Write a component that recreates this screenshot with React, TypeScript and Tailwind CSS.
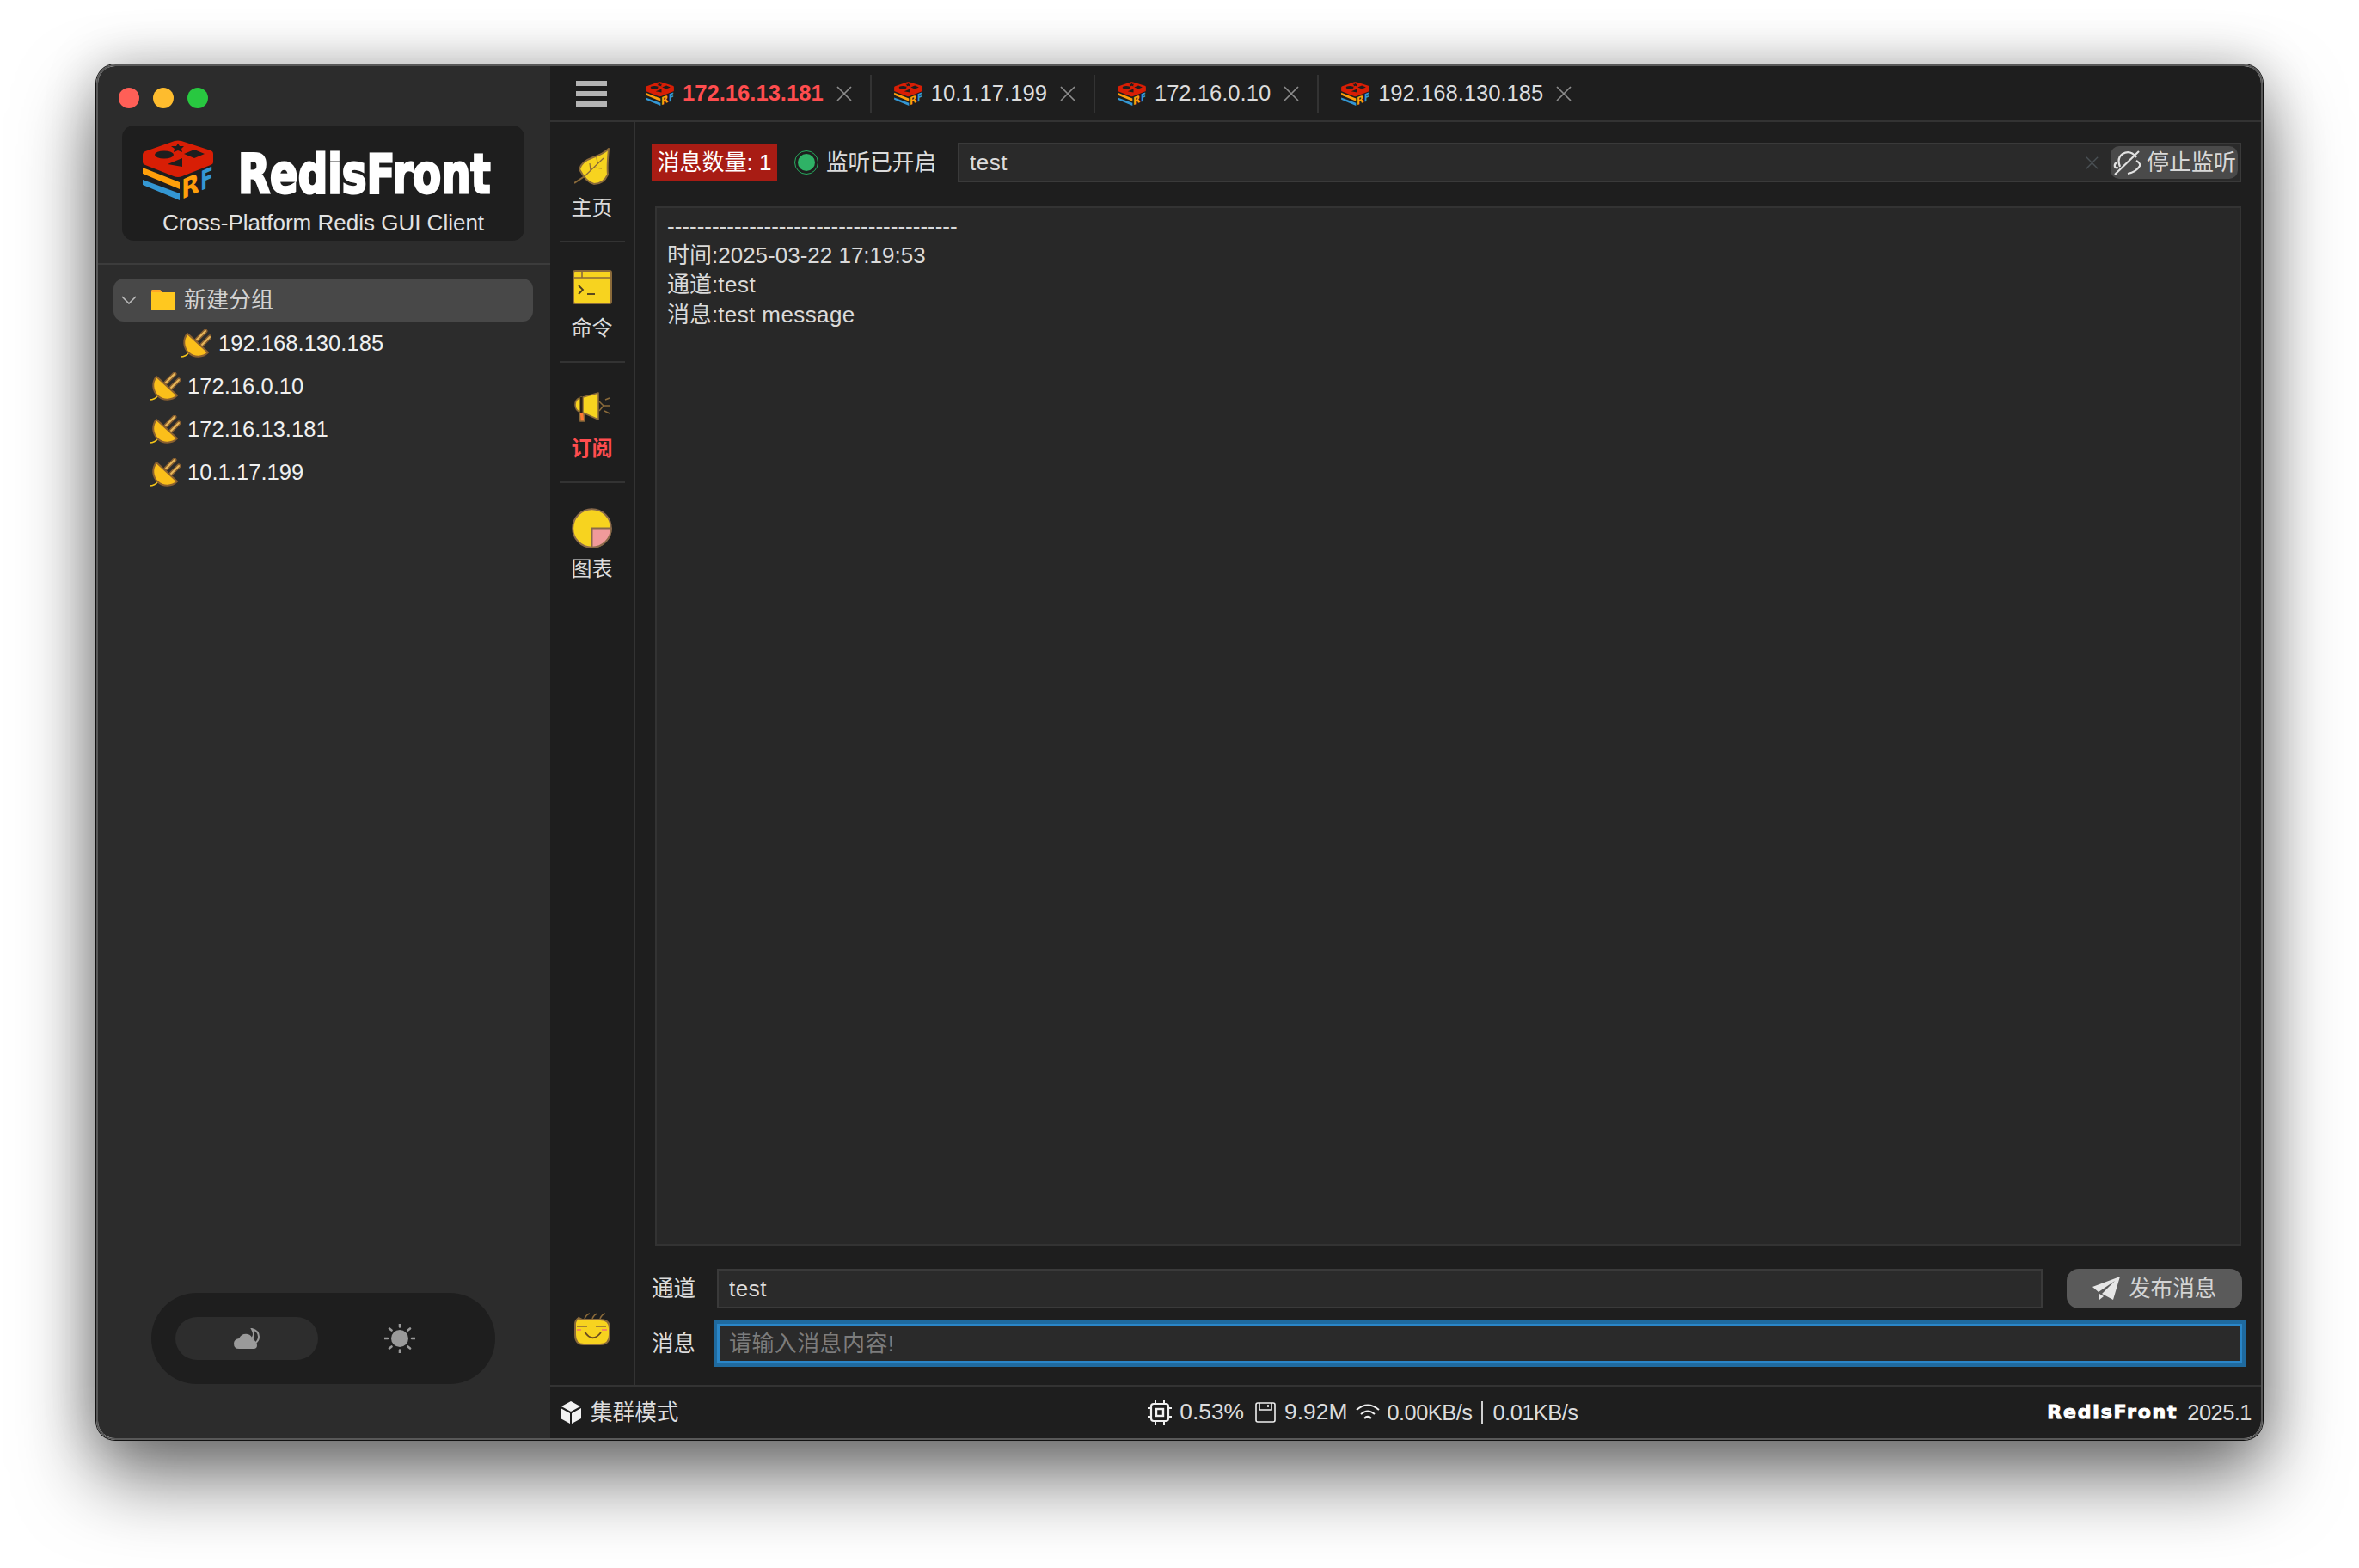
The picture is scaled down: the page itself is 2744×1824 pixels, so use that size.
const FONT = "font-['Liberation_Sans','Noto_Sans_CJK_SC',sans-serif]";

function Logo({ className }: { className: string }) {
  return (
    <svg viewBox="0 0 82 70" className={`${className} overflow-visible`}>
      <path d="M0 32 L43 49 L43 57 L0 39 Z" fill="#ff9f0a" />
      <path d="M0 46 L43 62 L43 70 L0 52 Z" fill="#3497d3" />
      <path d="M3 13 L37 1 Q41 0 45 1 L79 12 Q82 13 82 16 L82 26 Q82 28 79 29 L46 42 Q41 44 36 42 L3 29 Q0 28 0 26 L0 17 Q0 14 3 13 Z" fill="#d81e05" />
      <ellipse cx="25" cy="17" rx="11" ry="4.5" fill="#1e1e1e" />
      <path d="M41 4 L43 7 L48 7 L45 10 L46 14 L41 12 L36 14 L37 10 L33 7 L39 7 Z" fill="#1e1e1e" />
      <path d="M60 11 L72 16 L60 21 L48 16 Z" fill="#1e1e1e" />
      <path d="M29 28 L46 21 L46 31 Z" fill="#1e1e1e" />
      <g transform="translate(45 69) skewY(-24)" fontFamily="'DejaVu Sans',sans-serif" fontWeight="bold" fontSize="31">
        <text x="0" y="0" fill="#ff9f0a" textLength="21" lengthAdjust="spacingAndGlyphs">R</text>
        <text x="22" y="0" fill="#3497d3" textLength="15" lengthAdjust="spacingAndGlyphs">F</text>
      </g>
    </svg>
  );
}

function Plug() {
  return (
    <svg viewBox="0 0 36 33" className="h-[33px] w-[36px] shrink-0">
      <path d="M0 32 Q6 32 10 27" stroke="#f5c518" strokeWidth="1.6" fill="none" />
      <path d="M19 12 L29 2 M25 18 L34 9" stroke="#8a6030" strokeWidth="5" strokeLinecap="round" />
      <path d="M19 12 L29 2 M25 18 L34 9" stroke="#e8b85a" strokeWidth="2" strokeLinecap="round" />
      <path d="M8 5 L32 27 A16.3 16.3 0 0 1 8 5 Z" fill="#fbbf1a" stroke="#8a6030" strokeWidth="2" strokeLinejoin="round" />
    </svg>
  );
}

function Close({ color = "#8c8c8c", size = "h-[18px] w-[18px]" }: { color?: string; size?: string }) {
  return (
    <svg viewBox="0 0 18 18" className={`${size} shrink-0`}>
      <path d="M1 1 L17 17 M17 1 L1 17" stroke={color} strokeWidth="1.7" />
    </svg>
  );
}

function Leaf() {
  return (
    <svg viewBox="0 0 42 44" className="h-[44px] w-[42px]">
      <path d="M0 41 L12 33" stroke="#8a6a3a" strokeWidth="2" />
      <path d="M40 1 Q38 22 39 31 Q34 42 23 42 Q14 40 6 25 Q8 16 22 11 Q34 7 40 1 Z" fill="#f7d31f" stroke="#8a6a3a" strokeWidth="2" strokeLinejoin="round" />
      <path d="M12 33 L34 12 M23 23 L32 24 M19 27 L18 18 M27 18 L26 11" stroke="#8a6a3a" strokeWidth="1.2" fill="none" />
    </svg>
  );
}

function Terminal() {
  return (
    <svg viewBox="0 0 46 40" className="h-[40px] w-[46px]">
      <rect x="1" y="1" width="44" height="38" rx="2" fill="#f7d31f" stroke="#8a6a3a" strokeWidth="2" />
      <path d="M1 9 H45 M11 1 V9" stroke="#8a6a3a" strokeWidth="1.6" />
      <path d="M7 18 L12 23 L7 28" stroke="#4a3a20" strokeWidth="1.8" fill="none" />
      <path d="M17 28 H26" stroke="#4a3a20" strokeWidth="1.8" />
    </svg>
  );
}

function Megaphone() {
  return (
    <svg viewBox="0 0 42 36" className="h-[36px] w-[42px]">
      <path d="M8 6 Q1 8 1 15 Q1 22 8 24 Z" fill="#f7d31f" stroke="#8a6a3a" strokeWidth="1.6" />
      <path d="M6 24 H11 L12 34 H7 Z" fill="#ff7a33" stroke="#8a6a3a" strokeWidth="1.6" />
      <path d="M10 6 L28 1 V32 L10 24 Z" fill="#f7d31f" stroke="#8a6a3a" strokeWidth="1.6" strokeLinejoin="round" />
      <path d="M8 6 V24" stroke="#2a2018" strokeWidth="3" />
      <path d="M29 11 L34 16 L29 22" stroke="#8a6a3a" strokeWidth="1.5" fill="none" />
      <path d="M36 9 L41 7 M35 16 H42 M35 22 L41 25" stroke="#8a6a3a" strokeWidth="1.5" />
    </svg>
  );
}

function Pie() {
  return (
    <svg viewBox="0 0 48 48" className="h-[47px] w-[47px]">
      <circle cx="24" cy="24" r="22.8" fill="#f7d31f" stroke="#8a6a4a" strokeWidth="2" />
      <path d="M24 24 H46.8 A22.8 22.8 0 0 1 24 46.8 Z" fill="#f09a9a" stroke="#8a6a4a" strokeWidth="2" />
    </svg>
  );
}

function Smiley() {
  return (
    <svg viewBox="0 0 42 38" className="h-[38px] w-[42px]">
      <path d="M12 7 Q14 2 18 1 M21 7 Q23 2 27 1 M30 7 Q32 2 36 1" stroke="#8a6a3a" strokeWidth="1.6" fill="none" />
      <path d="M5 6 L9 8 H30 Q41 8 41 18 V26 Q41 37 30 37 H11 Q1 37 1 26 V13 Q1 9 5 6 Z" fill="#f7d31f" stroke="#8a6a3a" strokeWidth="2" />
      <path d="M3 16 H15 M25 16 H37" stroke="#8a6a3a" strokeWidth="1.4" />
      <path d="M3 20 H8 M32 20 H38" stroke="#f58a5a" strokeWidth="2" />
      <path d="M12 22 Q21 36 31 23" stroke="#6a4a20" strokeWidth="1.8" fill="none" />
    </svg>
  );
}

const NAV = [
  { label: "主页", icon: <Leaf /> },
  { label: "命令", icon: <Terminal /> },
  { label: "订阅", icon: <Megaphone />, active: true },
  { label: "图表", icon: <Pie /> },
];

const TABS = [
  { name: "172.16.13.181", active: true },
  { name: "10.1.17.199" },
  { name: "172.16.0.10" },
  { name: "192.168.130.185" },
];

function Sidebar() {
  return (
    <div className="flex w-[526px] shrink-0 flex-col bg-[#2c2c2c]">
      <div className="ml-[24px] mt-[25px] flex gap-[16px]">
        <div className="h-[24px] w-[24px] rounded-full bg-[#ff5f57]" />
        <div className="h-[24px] w-[24px] rounded-full bg-[#febc2e]" />
        <div className="h-[24px] w-[24px] rounded-full bg-[#28c840]" />
      </div>
      <div className="ml-[28px] mt-[20px] flex h-[134px] w-[468px] flex-col rounded-[14px] bg-[#1e1e1e]">
        <div className="ml-[24px] mt-[17px] flex h-[70px] items-start">
          <Logo className="h-[70px] w-[82px] shrink-0" />
          <span className="ml-[29px] mt-[5px] inline-block origin-left scale-x-[0.765] whitespace-nowrap font-['DejaVu_Sans',sans-serif] text-[63px] leading-[70px] font-bold text-white [-webkit-text-stroke:3px_white]">
            RedisFront
          </span>
        </div>
        <div className="mt-[10px] text-center text-[26px] leading-[32px] text-[#e2e2e2]">
          Cross-Platform Redis GUI Client
        </div>
      </div>
      <div className="mt-[26px] h-[2px] bg-[#3c3c3c]" />
      <div className="ml-[18px] mt-[16px] w-[488px]">
        <div className="flex h-[50px] items-center rounded-[12px] bg-[#484848] pl-[9px]">
          <svg viewBox="0 0 18 10" className="h-[10px] w-[18px]">
            <path d="M1 1 L9 9 L17 1" stroke="#bdbdbd" strokeWidth="1.6" fill="none" />
          </svg>
          <svg viewBox="0 0 28 24" className="ml-[17px] h-[24px] w-[28px]">
            <path d="M0 2 Q0 0 2 0 H10 L13 3 H28 V24 H0 Z" fill="#ffc81f" />
            <path d="M0 2 Q0 0 2 0 H10 L13 3 H0 Z" fill="#ffa726" />
          </svg>
          <span className="ml-[10px] text-[26px] text-[#d2d2d2]">新建分组</span>
        </div>
        <div className="flex h-[50px] items-center pl-[78px]">
          <Plug />
          <span className="ml-[8px] text-[25.6px] text-[#f0f0f0]">192.168.130.185</span>
        </div>
        {["172.16.0.10", "172.16.13.181", "10.1.17.199"].map((ip) => (
          <div key={ip} className="flex h-[50px] items-center pl-[42px]">
            <Plug />
            <span className="ml-[8px] text-[25.6px] text-[#f0f0f0]">{ip}</span>
          </div>
        ))}
      </div>
      <div className="mb-[63px] ml-[62px] mt-auto flex h-[106px] w-[400px] items-center gap-[12px] rounded-full bg-[#1e1e1e] px-[28px]">
        <div className="flex h-[50px] w-[166px] items-center justify-center rounded-full bg-[#2d2d2d]">
          <svg viewBox="0 0 30 25" className="h-[25px] w-[30px]">
            <path d="M6 24 Q0 24 0 18 Q0 13 6 12 Q9 6 16 7 Q21 8 22 14 Q27 15 27 20 Q27 24 23 24 Z" fill="#9a9a9a" />
            <path d="M21 1 Q29 3 29 10 Q29 15 24 18 Q24 14 21 12 Q25 8 21 1 Z" fill="none" stroke="#9a9a9a" strokeWidth="2" />
          </svg>
        </div>
        <div className="flex h-[50px] w-[166px] items-center justify-center">
          <svg viewBox="0 0 36 34" className="h-[34px] w-[36px]">
            <circle cx="18" cy="17" r="10" fill="#9a9a9a" />
            <path d="M18 0 V3.5 M18 30.5 V34 M0.5 17 H4 M32 17 H35.5 M6 5.5 L8.5 7.5 M30 5.5 L27.5 7.5 M6 28.5 L8.5 26.5 M30 28.5 L27.5 26.5" stroke="#9a9a9a" strokeWidth="2.6" strokeLinecap="round" />
          </svg>
        </div>
      </div>
    </div>
  );
}

function TabBar() {
  return (
    <div className="flex h-[65px] shrink-0 items-center border-b-2 border-[#333333] pl-[30px]">
      <div className="flex w-[36px] flex-col gap-[6px]">
        <div className="h-[6px] bg-[#b4b4b4]" />
        <div className="h-[6px] bg-[#b4b4b4]" />
        <div className="h-[6px] bg-[#b4b4b4]" />
      </div>
      <div className="ml-[19px] flex">
        {TABS.map((tab, i) => (
          <div
            key={tab.name}
            className={`flex h-[44px] items-center pl-[26px] ${i < 3 ? "border-r-2 border-[#333333] pr-[21px]" : ""}`}
          >
            <Logo className="h-[28px] w-[33px] shrink-0" />
            <span
              className={`ml-[10px] text-[25.6px] ${tab.active ? "font-bold text-[#ff4d4f]" : "text-[#dcdcdc]"}`}
            >
              {tab.name}
            </span>
            <div className="ml-[15px]">
              <Close />
            </div>
          </div>
        ))}
      </div>
    </div>
  );
}

function NavRail() {
  return (
    <div className="flex w-[99px] shrink-0 flex-col border-r-2 border-[#333333]">
      {NAV.map((item, i) => (
        <div key={item.label}>
          <div className="flex h-[138px] flex-col items-center pt-[28px]">
            <div className="flex h-[48px] items-center justify-center">{item.icon}</div>
            <span
              className={`mt-[8px] text-[24px] leading-[32px] ${item.active ? "font-bold text-[#ff4d4f]" : "text-[#dcdcdc]"}`}
            >
              {item.label}
            </span>
          </div>
          {i < 3 && <div className="mx-auto h-[2px] w-[76px] bg-[#333333]" />}
        </div>
      ))}
      <div className="mb-[46px] mt-auto flex justify-center">
        <Smiley />
      </div>
    </div>
  );
}

function SubscribePanel() {
  return (
    <div className="flex min-w-0 flex-1 flex-col pb-[25px] pl-[19px] pr-[23px] pt-[24px]">
      <div className="flex h-[46px] shrink-0 items-center">
        <div className="flex h-[42px] w-[146px] items-center justify-center bg-[#a81c14] text-[26px] text-white">
          消息数量: 1
        </div>
        <div className="ml-[20px] flex h-[28px] w-[28px] items-center justify-center rounded-full border border-[#27ae60]">
          <div className="h-[20px] w-[20px] rounded-full bg-[#2fb266]" />
        </div>
        <span className="ml-[9px] text-[25.6px] text-[#dcdcdc]">监听已开启</span>
        <div className="ml-[25px] flex h-[46px] min-w-0 flex-1 items-center border-2 border-[#3a3a3a] bg-[#2a2a2a] pl-[12px] pr-[2px]">
          <input
            defaultValue="test"
            className="min-w-0 flex-1 bg-transparent text-[26px] tracking-[0.5px] text-[#dcdcdc] outline-none"
          />
          <Close color="#4a5054" size="h-[15px] w-[15px]" />
          <div className="ml-[14px] flex h-[38px] w-[148px] items-center rounded-[10px] bg-[#4a4a4a] pl-[3px]">
            <svg viewBox="0 0 32 29" className="h-[29px] w-[32px]">
              <path d="M8 19 Q4 9 11 4 Q20 -1 27 8" stroke="#e2e2e2" strokeWidth="2.2" fill="none" />
              <path d="M5 14 Q1 15 2 19 Q3 21 6 20 M27 12 Q32 15 31 18 Q27 25 17 27" stroke="#e2e2e2" strokeWidth="2.2" fill="none" />
              <path d="M2 28 L30 1" stroke="#e2e2e2" strokeWidth="2.2" />
            </svg>
            <span className="ml-[7px] whitespace-nowrap text-[26px] text-[#d8d8d8]">停止监听</span>
          </div>
        </div>
      </div>
      <div className="ml-[4px] mt-[28px] min-h-0 flex-1 border-2 border-[#333333] bg-[#282828] pl-[12px] pt-[4px] text-[26px] leading-[34.2px] text-[#dadada]">
        <div>---------------------------------------</div>
        <div>时间:2025-03-22 17:19:53</div>
        <div>
          通道:<span className="tracking-[0.5px]">test</span>
        </div>
        <div>
          消息:<span className="tracking-[0.4px]">test message</span>
        </div>
      </div>
      <div className="mt-[27px] flex h-[46px] shrink-0 items-center">
        <span className="w-[76px] text-[25.6px] text-[#dcdcdc]">通道</span>
        <input
          defaultValue="test"
          className="h-[46px] min-w-0 flex-1 border-2 border-[#3a3a3a] bg-[#2a2a2a] pl-[12px] text-[26px] tracking-[0.5px] text-[#dcdcdc] outline-none"
        />
        <div className="-mr-px ml-[28px] flex h-[46px] w-[204px] items-center rounded-[14px] bg-[#5a5a5a] pl-[30px]">
          <svg viewBox="0 0 32 28" className="h-[28px] w-[32px]">
            <path d="M32 0 L0 12 L7 18 L26 5 L11 20 L24 27 Z" fill="#e6e6e6" />
            <path d="M8 20 L8 27 L13 23 Z" fill="#e6e6e6" />
          </svg>
          <span className="ml-[10px] text-[25.6px] text-[#d4d4d4]">发布消息</span>
        </div>
      </div>
      <div className="mt-[18px] flex h-[46px] shrink-0 items-center">
        <span className="w-[76px] text-[25.6px] text-[#dcdcdc]">消息</span>
        <input
          placeholder="请输入消息内容!"
          className="-mr-px h-[46px] min-w-0 flex-1 border-[3px] border-[#2a86c8] bg-[#2a2a2a] pl-[11px] text-[26px] tracking-[0.4px] text-[#dcdcdc] shadow-[0_0_0_4px_#1f6a9f] outline-none placeholder:text-[#7c7c7c]"
        />
      </div>
    </div>
  );
}

function StatusBar() {
  return (
    <div className="flex h-[62px] shrink-0 items-center justify-between border-t-2 border-[#333333] pl-[12px] pr-[11px] text-[25.4px] text-[#dcdcdc]">
      <div className="flex items-center">
        <svg viewBox="0 0 24 26" className="h-[26px] w-[24px]">
          <path d="M12 0 L23 6 L12 12 L1 6 Z" fill="#f2f2f2" />
          <path d="M0 8 L11 14 V26 L0 20 Z M24 8 L13 14 V26 L24 20 Z" fill="#f2f2f2" />
        </svg>
        <span className="ml-[11px] text-[25.6px]">集群模式</span>
      </div>
      <div className="flex items-center">
        <svg viewBox="0 0 28 30" className="h-[30px] w-[28px]">
          <rect x="4" y="5" width="20" height="20" rx="3" fill="none" stroke="#f0f0f0" strokeWidth="2.2" />
          <rect x="10" y="11" width="8" height="8" fill="none" stroke="#f0f0f0" strokeWidth="2.4" />
          <path d="M9 0 V4 M19 0 V4 M9 26 V30 M19 26 V30 M0 10 H4 M0 20 H4 M24 10 H28 M24 20 H28" stroke="#f0f0f0" strokeWidth="2" />
        </svg>
        <span className="ml-[9px] text-[26.4px]">0.53%</span>
        <svg viewBox="0 0 24 24" className="ml-[13px] h-[24px] w-[24px]">
          <rect x="1" y="1" width="22" height="22" rx="2" fill="none" stroke="#f0f0f0" strokeWidth="1.6" />
          <path d="M5 1 V9 H19 V1 M15 3 V6" stroke="#f0f0f0" strokeWidth="1.6" fill="none" />
        </svg>
        <span className="ml-[10px] text-[26.4px]">9.92M</span>
        <svg viewBox="0 0 28 20" className="ml-[10px] h-[20px] w-[28px]">
          <path d="M1 7 Q14 -4 27 7 M6 12 Q14 5 22 12" stroke="#f0f0f0" strokeWidth="2" fill="none" />
          <path d="M10 17 Q14 13 18 17" stroke="#f0f0f0" strokeWidth="2.4" fill="none" />
        </svg>
        <span className="ml-[8px] tracking-[-0.5px]">0.00KB/s</span>
        <div className="ml-[11px] h-[26px] w-[2px] bg-[#cfcfcf]" />
        <span className="ml-[11px] tracking-[-0.5px]">0.01KB/s</span>
      </div>
      <div className="flex items-center">
        <span className="font-['DejaVu_Sans',sans-serif] text-[22px] font-bold tracking-[1.8px] text-white [-webkit-text-stroke:1px_white]">
          RedisFront
        </span>
        <span className="ml-[11px] tracking-[-0.5px]">2025.1</span>
      </div>
    </div>
  );
}

export default function App() {
  return (
    <div className={`h-[1824px] w-[2744px] overflow-hidden bg-white pl-[112px] pt-[75px] ${FONT}`}>
      <div className="flex h-[1600px] w-[2520px] overflow-hidden rounded-[22px] border-2 border-[#585858] shadow-[0_0_0_1px_#111,0_44px_90px_rgba(0,0,0,0.55),0_0_60px_rgba(0,0,0,0.22)]">
        <Sidebar />
        <div className="flex min-w-0 flex-1 flex-col bg-[#1e1e1e]">
          <TabBar />
          <div className="flex min-h-0 flex-1">
            <NavRail />
            <SubscribePanel />
          </div>
          <StatusBar />
        </div>
      </div>
    </div>
  );
}
